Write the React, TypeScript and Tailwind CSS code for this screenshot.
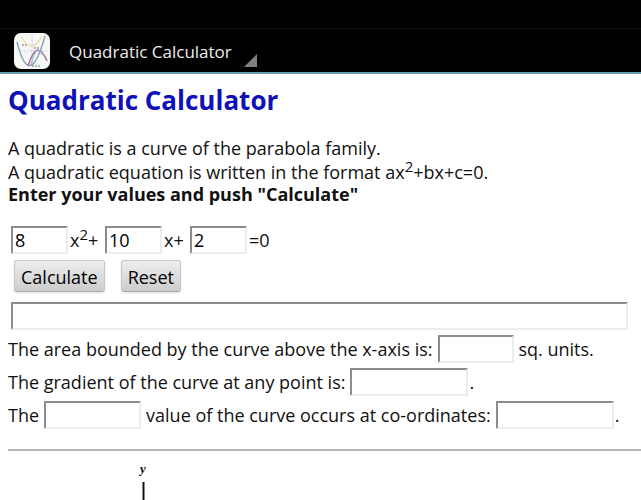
import { useState } from 'react'

const fieldClass =
  'h-7 min-w-0 shrink-0 border-2 border-t-[#8c8c8c] border-l-[#8c8c8c] border-r-[#ececec] border-b-[#ececec] bg-white px-0.5 text-black outline-none'

const buttonClass =
  'h-8 rounded-[3px] border border-[#c8c8c8] border-b-[#a8a8a8] bg-linear-to-b from-[#eeeeee] to-[#cccccc] px-1.5 pt-0.5 text-black shadow-sm'

function AppIcon() {
  return (
    <svg viewBox="0 0 36 36" className="size-9 shrink-0" aria-hidden="true">
      <rect width="36" height="36" rx="7" fill="#f6f8f5" />
      <path d="M7 18h27M18 1v34" stroke="#dccbe0" strokeWidth="1" strokeDasharray="2 1" />
      <path d="M7 3q10.500 20 21 0" fill="none" stroke="#eadba6" strokeWidth="1.4" />
      <path d="M3 9q12.500 50 28-6" fill="none" stroke="#7f9db4" strokeWidth="1.3" />
      <path d="M14 33q9-29 19-5" fill="none" stroke="#a7759c" strokeWidth="1.5" />
      <path d="M17 32q6-24 11-10" fill="none" stroke="#8fb0c6" strokeWidth="1" />
      <path d="M8 12h6M20 15h6" stroke="#c88b8b" strokeWidth="1.5" strokeDasharray="2 1" />
      <path d="M18 33h8" stroke="#8fa8a4" strokeWidth="1.4" strokeDasharray="2 1" />
    </svg>
  )
}

function Header() {
  return (
    <header className="border-b-2 border-[#659fb5] bg-black pt-7 text-[#ededed]">
      <div className="flex h-11 items-center border-t border-[#111111] pl-3.5">
        <AppIcon />
        <span className="ml-[19px] pt-0.5 text-[17px]">Quadratic Calculator</span>
        <svg viewBox="0 0 13 13" className="mt-5 ml-3 size-[13px]" aria-hidden="true">
          <path d="M13 0v13H0z" fill="#808080" />
        </svg>
      </div>
    </header>
  )
}

export default function App() {
  const [a, setA] = useState('8')
  const [b, setB] = useState('10')
  const [c, setC] = useState('2')
  const [roots, setRoots] = useState('')
  const [area, setArea] = useState('')
  const [gradient, setGradient] = useState('')
  const [kind, setKind] = useState('')
  const [point, setPoint] = useState('')

  const clearResults = () => {
    setRoots('')
    setArea('')
    setGradient('')
    setKind('')
    setPoint('')
  }

  const calculate = () => {
    const p = Number(a)
    const q = Number(b)
    const r = Number(c)
    if (!p) {
      clearResults()
      return
    }
    const d = q * q - 4 * p * r
    const x = -q / (2 * p)
    const round = (n: number) => Number(n.toFixed(3))
    if (d >= 0) {
      const s = Math.sqrt(d)
      setRoots(`x = ${round((-q + s) / (2 * p))} or x = ${round((-q - s) / (2 * p))}`)
    } else {
      setRoots('No real roots')
    }
    setArea(d > 0 ? String(round(d ** 1.5 / (6 * p * p))) : '0')
    setGradient(`${2 * p}x+${q}`)
    setKind(p > 0 ? 'minimum' : 'maximum')
    setPoint(`${round(x)}, ${round(p * x * x + q * x + r)}`)
  }

  const reset = () => {
    setA('8')
    setB('10')
    setC('2')
    clearResults()
  }

  return (
    <div className="min-h-screen overflow-x-hidden bg-white font-['Open_Sans',sans-serif] text-[18px] leading-6 text-[#111111]">
      <Header />
      <main className="pl-2">
        <h1 className="pt-1.5 text-[26px] leading-10 font-bold text-[#1010b8]">Quadratic Calculator</h1>

        <div className="mt-4">
          <p>A quadratic is a curve of the parabola family.</p>
          <p>
            A quadratic equation is written in the format ax<sup className="text-[15px]">2</sup>+bx+c=0.
          </p>
          <p className="leading-5 font-bold">Enter your values and push "Calculate"</p>
        </div>

        <form className="mt-[22px]" onSubmit={(e) => e.preventDefault()}>
          <div className="flex h-7 items-center pl-[3px] whitespace-nowrap">
            <input id="a" className={`${fieldClass} w-[57px]`} value={a} onChange={(e) => setA(e.target.value)} />
            <label htmlFor="a" className="w-[37px] shrink-0 pl-0.5">
              x<sup className="text-[15px]">2</sup>+
            </label>
            <input id="b" className={`${fieldClass} w-[57px]`} value={b} onChange={(e) => setB(e.target.value)} />
            <label htmlFor="b" className="w-7 shrink-0 pl-0.5">x+</label>
            <input id="c" className={`${fieldClass} w-[57px]`} value={c} onChange={(e) => setC(e.target.value)} />
            <label htmlFor="c" className="pl-0.5">=0</label>
          </div>
          <div className="mt-1.5 flex gap-4 pl-1.5">
            <button type="button" className={buttonClass} onClick={calculate}>Calculate</button>
            <button type="button" className={buttonClass} onClick={reset}>Reset</button>
          </div>

          <div className="mt-2.5 flex flex-col gap-[5px]">
            <div className="flex pr-[13px] pl-[3px]">
              <input aria-label="Roots" className={`${fieldClass} w-full`} value={roots} readOnly />
            </div>
            <div className="flex h-7 items-center gap-[5px] whitespace-nowrap">
              <label htmlFor="area">The area bounded by the curve above the x-axis is:</label>
              <input id="area" className={`${fieldClass} w-[76px]`} value={area} readOnly />
              <span>sq. units.</span>
            </div>
            <div className="flex h-7 items-center gap-[5px] whitespace-nowrap">
              <label htmlFor="gradient">The gradient of the curve at any point is:</label>
              <input id="gradient" className={`${fieldClass} w-[118px]`} value={gradient} readOnly />
              <span className="-ml-1">.</span>
            </div>
            <div className="flex h-7 items-center gap-[5px] whitespace-nowrap">
              <label htmlFor="kind">The</label>
              <input id="kind" className={`${fieldClass} w-[97px]`} value={kind} readOnly />
              <label htmlFor="point">value of the curve occurs at co-ordinates:</label>
              <input id="point" className={`${fieldClass} w-[118px]`} value={point} readOnly />
              <span className="-ml-1">.</span>
            </div>
          </div>
        </form>

        <hr className="mt-5 border-t-2 border-[#b4b4b4]" />

        <svg viewBox="0 0 270 49" className="block h-[49px] w-[270px]" role="img" aria-label="Graph of the curve">
          <text x="132" y="22" fontFamily="Liberation Serif, serif" fontSize="13" fontStyle="italic" fontWeight="bold" fill="#111111">y</text>
          <path d="M135.500 31v18" stroke="#111111" strokeWidth="2" />
        </svg>
      </main>
    </div>
  )
}
